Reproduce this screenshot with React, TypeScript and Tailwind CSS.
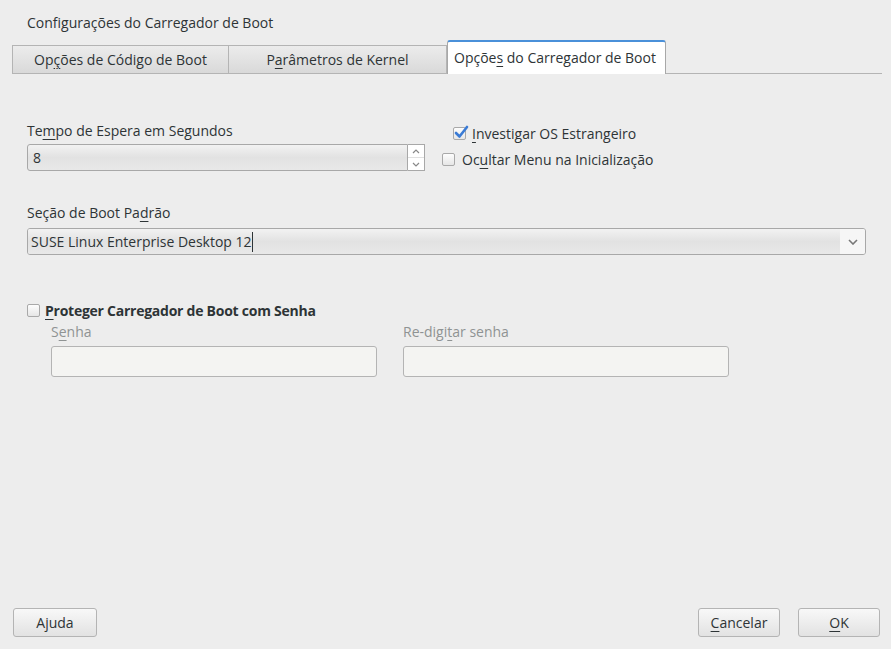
import React from "react";

const font = { fontFamily: '"Open Sans", "DejaVu Sans", sans-serif' };

function U({ children }: { children: React.ReactNode }) {
  return <span className="underline underline-offset-[3px] decoration-[1px]">{children}</span>;
}

function Checkbox({ checked }: { checked?: boolean }) {
  return (
    <span className="relative inline-block w-[13px] h-[13px] rounded-[2px] border border-[#a9a9a9] bg-gradient-to-b from-[#fdfdfd] to-[#e6e6e6]">
      {checked && (
        <svg className="absolute -left-[1px] -top-[3px]" width="16" height="15" viewBox="0 0 16 15">
          <path d="M3 8 L6.5 11.5 L14 2" fill="none" stroke="#3a7bd5" strokeWidth="2.6" strokeLinecap="round" strokeLinejoin="round" />
        </svg>
      )}
    </span>
  );
}

export default function App() {
  return (
    <div className="w-[891px] h-[649px] bg-[#ededed] text-[#2e3436] text-[14px] flex flex-col relative overflow-hidden" style={font}>
      <div className="pl-[27px] pt-[13px] h-[40px] leading-[20px]">Configurações do Carregador de Boot</div>
      <div className="flex items-end pl-[12px] pr-[9px] h-[34px]">
        <div className="w-[217px] h-[29px] border border-[#b4b4b4] bg-gradient-to-b from-[#ececec] to-[#d9d9d9] flex items-center justify-center pb-[1px]">
          <span>Op<U>ç</U>ões de Código de Boot</span>
        </div>
        <div className="w-[218px] h-[29px] border border-l-0 border-[#b4b4b4] bg-gradient-to-b from-[#ececec] to-[#d9d9d9] flex items-center justify-center pb-[1px]">
          <span>P<U>a</U>râmetros de Kernel</span>
        </div>
        <div className="w-[219px] h-[34px] bg-white border border-b-0 border-[#a8a8a8] border-t-[2px] border-t-[#4a90d9] rounded-t-[3px] flex items-center pl-[6px] pb-[2px]">
          <span>Opçõe<U>s</U> do Carregador de Boot</span>
        </div>
        <div className="flex-1 border-b border-[#b4b4b4]" />
      </div>

      <div className="flex pl-[27px] pt-[47px]">
        <div className="w-[398px]">
          <div className="leading-[20px] h-[23px]">Te<U>m</U>po de Espera em Segundos</div>
          <div className="flex h-[27px]">
            <div className="flex-1 border border-[#a8a8a8] rounded-l-[3px] bg-gradient-to-b from-[#f2f2f2] via-[#e2e2e2] to-[#e8e8e8] flex items-center pl-[5px]">8</div>
            <div className="w-[17px] border border-l-0 border-[#a8a8a8] bg-white flex flex-col">
              <div className="flex-1 flex items-center justify-center border-b border-[#e0e0e0]">
                <svg width="8" height="5" viewBox="0 0 8 5"><path d="M1 4 L4 1 L7 4" fill="none" stroke="#888" strokeWidth="1.2" /></svg>
              </div>
              <div className="flex-1 flex items-center justify-center">
                <svg width="8" height="5" viewBox="0 0 8 5"><path d="M1 1 L4 4 L7 1" fill="none" stroke="#888" strokeWidth="1.2" /></svg>
              </div>
            </div>
          </div>
        </div>
        <div className="pl-[17px]">
          <div className="flex items-center gap-[6px] pl-[11px] h-[24px]">
            <Checkbox checked />
            <span><U>I</U>nvestigar OS Estrangeiro</span>
          </div>
          <div className="flex items-center gap-[7px] h-[28px]">
            <Checkbox />
            <span>Oc<U>u</U>ltar Menu na Inicialização</span>
          </div>
        </div>
      </div>

      <div className="pl-[27px] pr-[25px] pt-[30px]">
        <div className="leading-[20px] h-[25px]">Seção de Boot Pa<U>d</U>rão</div>
        <div className="flex h-[27px] border border-[#a8a8a8] rounded-[3px] overflow-hidden">
          <div className="flex-1 bg-gradient-to-b from-[#f2f2f2] via-[#e2e2e2] to-[#e8e8e8] flex items-center pl-[3px]">
            <span>SUSE Linux Enterprise Desktop 12</span><span className="inline-block w-[1px] h-[20px] bg-[#2e3436]" />
          </div>
          <div className="w-[25px] bg-[#f6f6f6] flex items-center justify-center">
            <svg width="10" height="6" viewBox="0 0 10 6"><path d="M1 1 L5 5 L9 1" fill="none" stroke="#777" strokeWidth="1.6" /></svg>
          </div>
        </div>
      </div>

      <div className="pl-[27px] pt-[45px]">
        <div className="flex items-center gap-[5px] h-[20px]">
          <Checkbox />
          <span className="font-bold tracking-[-0.25px]"><U>P</U>roteger Carregador de Boot com Senha</span>
        </div>
        <div className="flex gap-[26px] pl-[24px] pt-[2px] text-[#8f9393]">
          <div>
            <div className="h-[24px] leading-[20px]">S<U>e</U>nha</div>
            <div className="w-[326px] h-[31px] border border-[#b4b4b4] rounded-[3px] bg-[#f4f4f2]" />
          </div>
          <div>
            <div className="h-[24px] leading-[20px]">Re-digi<U>t</U>ar senha</div>
            <div className="w-[326px] h-[31px] border border-[#b4b4b4] rounded-[3px] bg-[#f4f4f2]" />
          </div>
        </div>
      </div>

      <div className="flex-1" />
      <div className="flex items-center pl-[13px] pr-[11px] pb-[12px]">
        <button className="w-[84px] h-[29px] border border-[#b4b4b4] rounded-[3px] bg-gradient-to-b from-[#f8f8f8] to-[#e2e2e2]">Ajuda</button>
        <div className="flex-1" />
        <button className="w-[82px] h-[29px] border border-[#b4b4b4] rounded-[3px] bg-gradient-to-b from-[#f8f8f8] to-[#e2e2e2]"><U>C</U>ancelar</button>
        <button className="ml-[18px] w-[82px] h-[29px] border border-[#b4b4b4] rounded-[3px] bg-gradient-to-b from-[#f8f8f8] to-[#e2e2e2]"><U>O</U>K</button>
      </div>
    </div>
  );
}
